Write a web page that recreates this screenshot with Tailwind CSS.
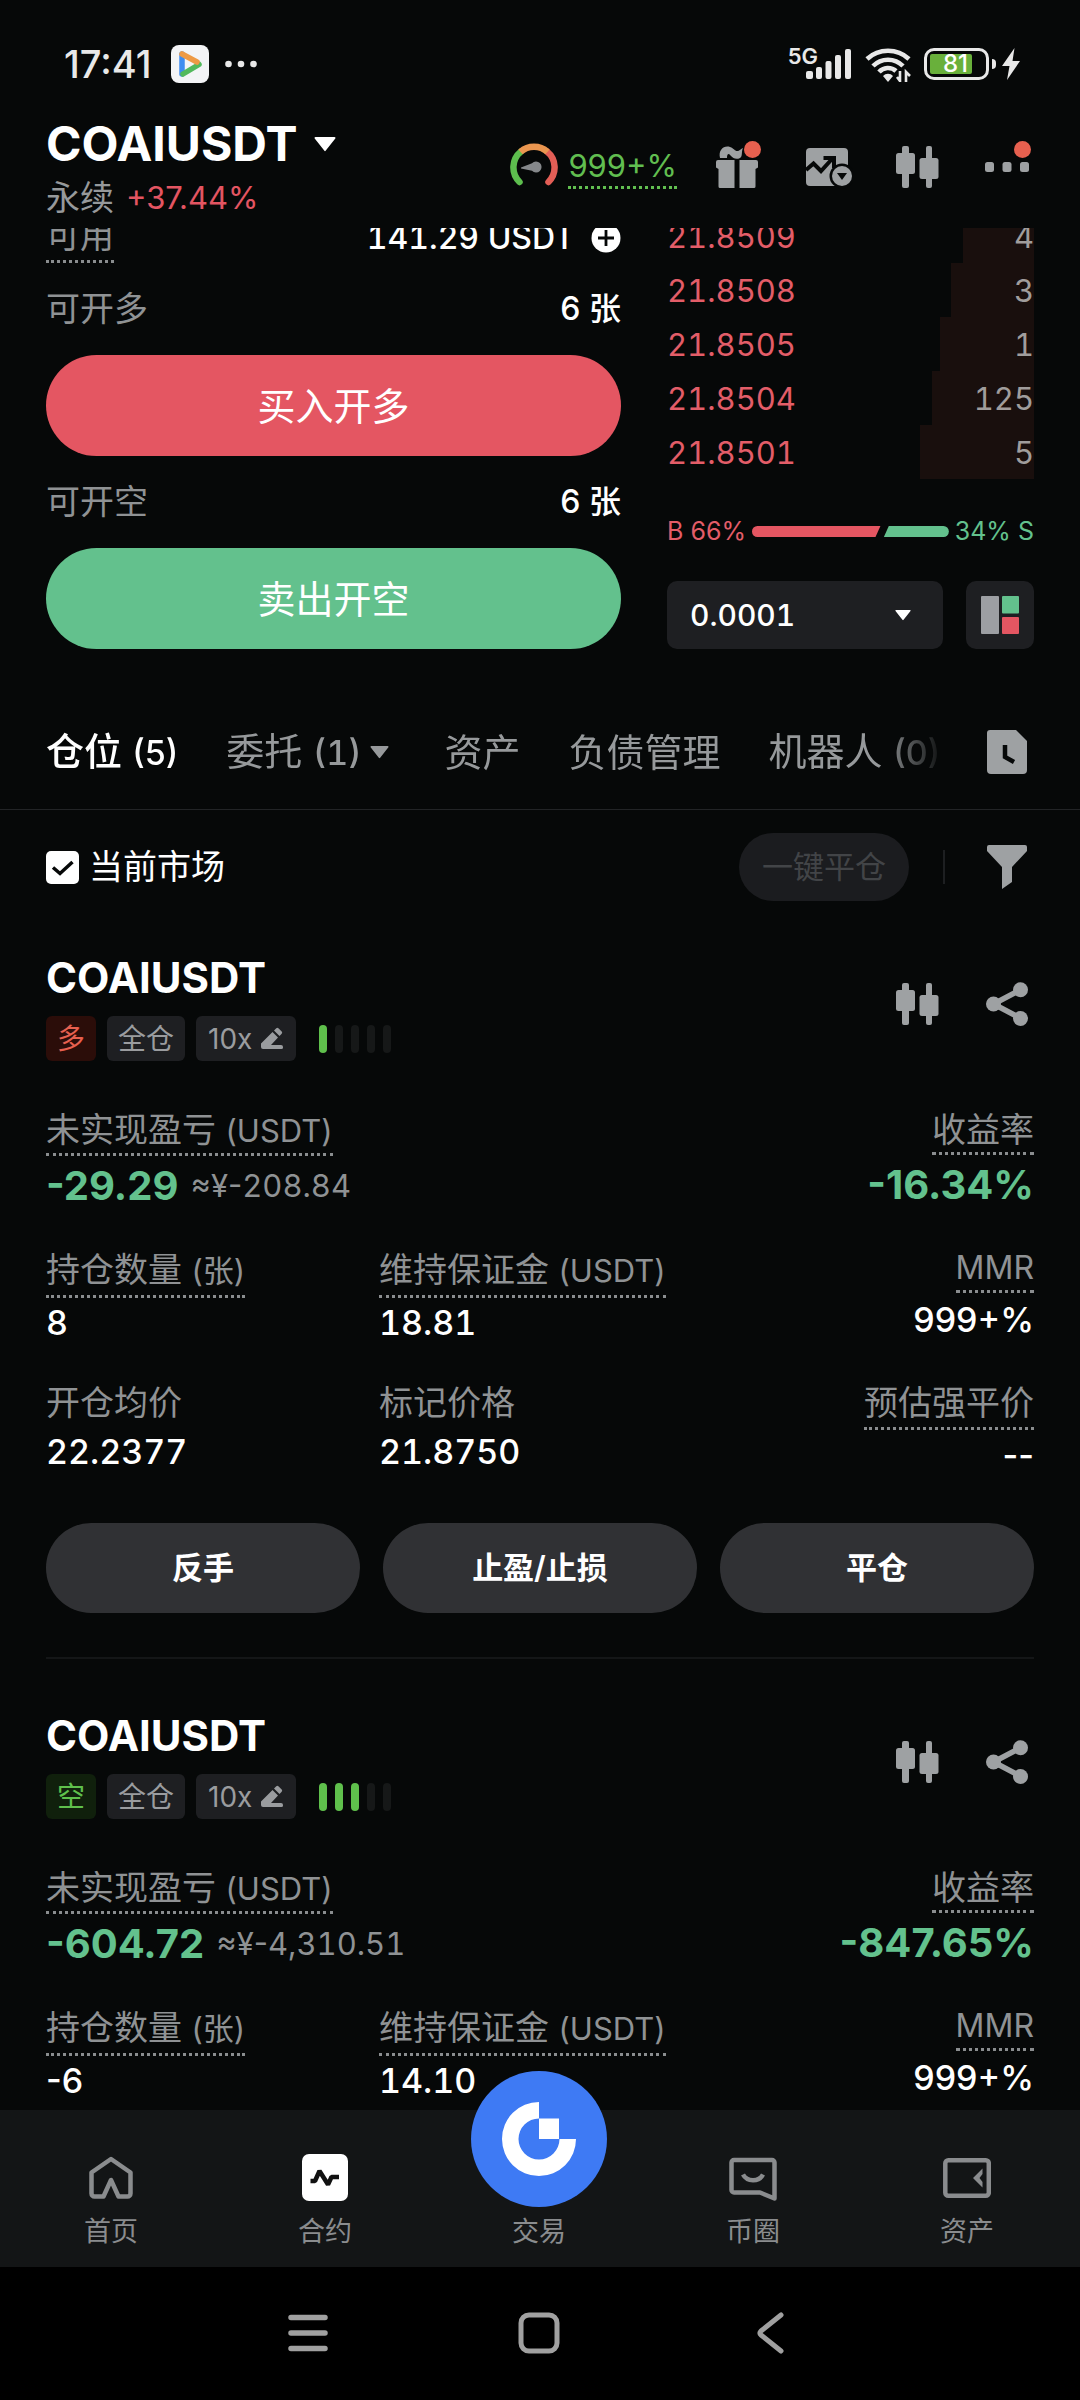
<!DOCTYPE html>
<html lang="zh-CN">
<head>
<meta charset="utf-8">
<meta name="viewport" content="width=device-width, initial-scale=1">
<title>COAIUSDT 永续</title>
<script src="https://cdn.jsdelivr.net/npm/@tailwindcss/browser@4"></script>
</head>
<body class="flex min-h-screen flex-col bg-[#060808] font-['Inter','Noto_Sans_CJK_SC',sans-serif] text-[31px] leading-10 text-white">

<svg class="hidden" aria-hidden="true">
  <symbol id="candles" viewBox="0 0 44 44">
    <g fill="currentColor">
      <rect x="7" y="1" width="7" height="42" rx="2"/><rect x="1" y="8" width="19" height="21" rx="2.5"/>
      <rect x="31" y="1" width="6" height="42" rx="2"/><rect x="24.500" y="13" width="19" height="21" rx="2.5"/>
    </g>
  </symbol>
  <symbol id="share" viewBox="0 0 44 44">
    <path d="M36 7.500 8.500 22 36 36.500" fill="none" stroke="currentColor" stroke-width="5.5"/>
    <g fill="currentColor"><circle cx="8.500" cy="22" r="7.500"/><circle cx="35.500" cy="7.800" r="7.500"/><circle cx="35.500" cy="36.500" r="7.500"/></g>
  </symbol>
  <symbol id="pen" viewBox="0 0 24 24">
    <g fill="currentColor"><path d="M1 16.500 12.500 5 18 10.500 11 18H21a2 2 0 0 1 2 2v.5a1.500 1.500 0 0 1-1.500 1.500H3a2 2 0 0 1-2-2Z"/><path d="M14 3.500 16.300 1.300a1.500 1.500 0 0 1 2.100 0l3.300 3.300a1.500 1.500 0 0 1 0 2.100L19.500 9Z"/></g>
  </symbol>
  <symbol id="caret" viewBox="0 0 22 16"><path d="M1.500 1h19a1 1 0 0 1 .8 1.600L11.800 14.600a1 1 0 0 1-1.600 0L.7 2.600A1 1 0 0 1 1.500 1Z" fill="currentColor"/></symbol>
</svg>

<header class="px-[46px] pt-10 pb-[11px]">
  <div class="flex h-12 items-center pr-3.5 pl-[18px] text-[#e8e8e8]">
    <span class="text-[38px] font-medium">17:41</span>
    <svg class="ml-5 size-[38px]" viewBox="0 0 38 38">
      <rect width="38" height="38" rx="8" fill="#f3f4f6"/>
      <path d="M11 9v20" stroke="#3f8df0" stroke-width="5.500" stroke-linecap="round"/>
      <path d="M12 29 28 19.500" stroke="#52b95c" stroke-width="5.500" stroke-linecap="round"/>
      <path d="M11 9 26 17" stroke="#ee9a45" stroke-width="5.500" stroke-linecap="round"/>
    </svg>
    <svg class="ml-4 h-2 w-8" viewBox="0 0 32 8" fill="currentColor"><circle cx="3.500" cy="4" r="3.300"/><circle cx="16" cy="4" r="3.300"/><circle cx="28.500" cy="4" r="3.300"/></svg>
    <div class="ml-auto flex items-center">
      <span class="self-start text-[22px] leading-5 font-semibold">5G</span>
      <svg class="-ml-3 h-8 w-[46px]" viewBox="0 0 46 32" fill="currentColor"><rect x="0" y="23" width="7" height="8" rx="2"/><rect x="10" y="19" width="6" height="12" rx="2"/><rect x="19.500" y="13" width="6" height="18" rx="2"/><rect x="29" y="7" width="6" height="24" rx="2"/><rect x="39" y="1" width="6" height="30" rx="2"/></svg>
      <svg class="ml-3 h-9 w-12" viewBox="0 0 48 36" fill="none" stroke="currentColor">
        <path d="M3 13a31 31 0 0 1 42 0M9 20a21 21 0 0 1 30 0M15 26a12 12 0 0 1 17-1" stroke-width="4.600"/>
        <path d="M19 30a6.500 6.500 0 0 1 10 0l-5 6Z" fill="currentColor" stroke="none"/>
        <path d="M36 25v10l-3-4M42 36V26l4 4" stroke-width="2.600"/>
      </svg>
      <div class="ml-3 flex h-8 w-[65px] rounded-[10px] border-[3px] border-[#e8e8e8] p-[3px]"><span class="flex h-5 w-[42px] items-center justify-end rounded-xs bg-[#69b03b] pr-1 text-[24px] leading-5 font-medium text-white">81</span></div>
      <span class="ml-[3px] h-2.5 w-1 rounded-r bg-[#e8e8e8]"></span>
      <svg class="ml-1.5 h-8 w-[18px]" viewBox="0 0 18 32" fill="currentColor"><path d="M12.500 0 0 18h7.500L5 32 18 13h-7.500Z"/></svg>
    </div>
  </div>

  <div class="mt-7 flex items-center justify-between">
    <div>
      <button class="flex h-14 items-center gap-4 text-[48px] font-bold">COAIUSDT<svg class="h-4 w-[22px]"><use href="#caret"/></svg></button>
      <div class="mt-1.5 flex items-center gap-3"><span class="text-[34px] text-[#96999b]">永续</span><span class="text-[#e35562]">+37.44%</span></div>
    </div>
    <div class="mr-[5px] flex items-center gap-[46px] text-[#9ea1a3]">
      <a href="#risk" class="-mr-2 flex items-center gap-2.5 text-[#61be50]">
        <svg class="size-12" viewBox="0 0 48 48" fill="none" stroke-width="6.500">
          <path d="M9.500 39A20.500 20.500 0 0 1 11 8.500" stroke="#5dbe4e" stroke-linecap="round"/>
          <path d="M37 8.500A20.500 20.500 0 0 1 38.500 39" stroke="#e35e56" stroke-linecap="round"/>
          <path d="M10.500 8.900A20.500 20.500 0 0 1 37.500 8.900" stroke="#ea9650"/>
          <path d="M11 24.500 22 20.300a5.500 5.500 0 1 1 0 7.400L11 25.500Z" fill="#85888b"/>
        </svg>
        <span class="border-b-[3px] border-dotted border-current">999+%</span>
      </a>
      <button class="relative" aria-label="礼物">
        <svg class="size-11" viewBox="0 0 44 44" fill="currentColor"><path d="M3 15H19.500V43H5a1.500 1.500 0 0 1-1.500-1.500V24L1 22.500V17a2 2 0 0 1 2-2ZM24.500 15H41a2 2 0 0 1 2 2v5.500L40.500 24V41.500A1.500 1.500 0 0 1 39 43H24.500Z"/><path d="M5 13C3 5 9 0 15 2c4 1.500 5 4 7 4 3 0 3-2 6-3-2 4 0 8-3 10-4 2-7 0-9-2-2-3-4-3-4 2Z"/></svg>
        <span class="absolute -top-1 -right-0.5 size-[17px] rounded-full bg-[#e7604f]"></span>
      </button>
      <button aria-label="行情图">
        <svg class="h-11 w-12" viewBox="0 0 48 44"><rect x="1" y="3" width="42" height="38" rx="4" fill="currentColor"/><path d="M1 25 8.500 18.500 16 26 27 14M18.500 13H29V23" fill="none" stroke="#060808" stroke-width="4"/><circle cx="37" cy="31" r="12.500" fill="#060808"/><circle cx="37" cy="31" r="10" fill="currentColor"/><path d="M32 28h10l-5 7Z" fill="#060808"/></svg>
      </button>
      <button class="-ml-1" aria-label="K线"><svg class="size-11"><use href="#candles"/></svg></button>
      <button class="relative" aria-label="更多">
        <svg class="size-11" viewBox="0 0 44 44" fill="currentColor"><rect x="0" y="17" width="9" height="10" rx="2.500"/><rect x="17.500" y="17" width="9" height="10" rx="2.500"/><rect x="35" y="17" width="9" height="10" rx="2.500"/></svg>
        <span class="absolute -top-1 -right-0.5 size-[17px] rounded-full bg-[#e7604f]"></span>
      </button>
    </div>
  </div>
</header>

<main>
  <section class="-mt-px flex gap-[46px] overflow-hidden px-[46px]">
    <div class="-mt-4 flex flex-1 flex-col gap-[23px]">
      <div class="flex items-start justify-between">
        <span class="border-b-[3px] border-dotted border-[#8a8d8f] text-[34px] leading-12 text-[#8f9294]">可用</span>
        <span class="flex h-[51px] items-center gap-4 font-medium"><span class="text-[32px]"><span class="tabular-nums">141.29</span> USDT</span>
          <svg class="size-[30px]" viewBox="0 0 30 30"><circle cx="15" cy="15" r="14.500" fill="#fff"/><path d="M15 7v16M7 15h16" stroke="#060808" stroke-width="2.800"/></svg></span>
      </div>
      <div class="flex h-[46px] items-center justify-between"><span class="text-[34px] text-[#8f9294]">可开多</span><span class="text-[32px] font-medium">6 张</span></div>
      <button class="h-[101px] rounded-full bg-[#e45662] text-[38px]">买入开多</button>
      <div class="flex h-[46px] items-center justify-between"><span class="text-[34px] text-[#8f9294]">可开空</span><span class="text-[32px] font-medium">6 张</span></div>
      <button class="h-[101px] rounded-full bg-[#63c18d] text-[38px]">卖出开空</button>
    </div>

    <div class="-mt-[19px] w-[367px]">
      <ul class="text-[#e35d68] tabular-nums">
        <li class="relative flex h-[54px] items-center justify-between pt-0.5"><span class="absolute inset-y-0 right-0 bg-[#190f0d]" style="width:19.300%"></span><span>21.8509</span><span class="relative text-[#a09d9c]">4</span></li>
        <li class="relative flex h-[54px] items-center justify-between pt-0.5"><span class="absolute inset-y-0 right-0 bg-[#190f0d]" style="width:22.600%"></span><span>21.8508</span><span class="relative text-[#a09d9c]">3</span></li>
        <li class="relative flex h-[54px] items-center justify-between pt-0.5"><span class="absolute inset-y-0 right-0 bg-[#190f0d]" style="width:25.600%"></span><span>21.8505</span><span class="relative text-[#a09d9c]">1</span></li>
        <li class="relative flex h-[54px] items-center justify-between pt-0.5"><span class="absolute inset-y-0 right-0 bg-[#190f0d]" style="width:27.800%"></span><span>21.8504</span><span class="relative text-[#a09d9c]">125</span></li>
        <li class="relative flex h-[54px] items-center justify-between pt-0.5"><span class="absolute inset-y-0 right-0 bg-[#190f0d]" style="width:31.100%"></span><span>21.8501</span><span class="relative text-[#a09d9c]">5</span></li>
      </ul>
      <div class="mt-[38px] flex h-7 items-center gap-1.5 text-[25px]">
        <span class="whitespace-nowrap text-[#e35d68]">B 66%</span>
        <svg class="h-[11px] min-w-0 flex-1" viewBox="0 0 200 11" preserveAspectRatio="none"><path d="M5.500 0H130.500L125.500 11H5.500a5.500 5.500 0 0 1 0-11Z" fill="#e45662"/><path d="M139 0H194.500a5.500 5.500 0 0 1 0 11H134Z" fill="#63c18d"/></svg>
        <span class="whitespace-nowrap text-[#63c18d]">34% S</span>
      </div>
      <div class="mt-9 flex gap-[23px]">
        <label class="relative flex-1">
          <select aria-label="价格精度" class="h-[68px] w-full appearance-none rounded-[10px] bg-[#1e1f22] px-[23px] text-[30px] font-medium tabular-nums"><option>0.0001</option></select>
          <svg class="pointer-events-none absolute top-7 right-8 h-3 w-4" viewBox="0 0 22 16"><use href="#caret"/></svg>
        </label>
        <button class="flex size-[68px] items-center justify-center rounded-[10px] bg-[#1e1f22]" aria-label="盘口布局">
          <svg class="size-[38px]" viewBox="0 0 38 38"><rect width="18" height="38" rx="1" fill="#9d9fa3"/><rect x="21" width="17" height="17.500" rx="1" fill="#63c18d"/><rect x="21" y="21" width="17" height="17" rx="1" fill="#e45662"/></svg>
        </button>
      </div>
    </div>
  </section>

  <div class="mt-[46px] flex h-[115px] items-center border-b border-[#222426] px-[46px]">
    <nav class="flex min-w-0 flex-1 items-center gap-12 overflow-hidden text-[38px] leading-12 whitespace-nowrap text-[#96999b] [mask-image:linear-gradient(to_right,black_calc(100%-64px),transparent)]">
      <a href="#positions" class="font-medium text-white">仓位 <span class="text-[34px]">(5)</span></a>
      <a href="#orders" class="mr-2 flex items-center gap-2"><span>委托 <span class="text-[34px] font-medium tabular-nums">(1)</span></span><svg class="h-3.5 w-[19px]" viewBox="0 0 22 16"><use href="#caret"/></svg></a>
      <a href="#assets">资产</a>
      <a href="#debts">负债管理</a>
      <a href="#bots">机器人 <span class="text-[34px] font-medium">(0)</span></a>
    </nav>
    <button class="mr-[5px] ml-10 text-[#9ea1a3]" aria-label="历史记录">
      <svg class="size-11" viewBox="0 0 44 44"><path d="M5 0H31L42 11V40a4 4 0 0 1-4 4H6a4 4 0 0 1-4-4V3a3 3 0 0 1 3-3Z" fill="currentColor"/><path d="M20 15V27L29 32" fill="none" stroke="#060808" stroke-width="4.500"/></svg>
    </button>
  </div>

  <div class="flex h-[91px] items-center px-[46px] pt-[23px]">
    <label class="flex items-center gap-2.5 text-[34px]">
      <span class="relative flex size-[33px]">
        <input type="checkbox" checked class="size-full appearance-none rounded-[5px] bg-white">
        <svg class="pointer-events-none absolute inset-0" viewBox="0 0 33 33" fill="none" stroke="#060808" stroke-width="3.500"><path d="M7 16.500 14 22.500 26.500 11"/></svg>
      </span>当前市场</label>
    <button class="ml-auto h-[68px] rounded-full bg-[#1b1c1f] px-[23px] text-[#424447]">一键平仓</button>
    <span class="ml-[34px] h-[34px] w-0.5 bg-[#1d1f21]"></span>
    <button class="mr-[5px] ml-10 text-[#9ea1a3]" aria-label="筛选"><svg class="size-11" viewBox="0 0 44 44"><path d="M4 0H40a2 2 0 0 1 2 2V6L27 22V37L17 44V22L2 6V2a2 2 0 0 1 2-2Z" fill="currentColor"/></svg></button>
  </div>

  <article class="mx-[46px] border-b-2 border-[#141617] pt-[53px] pb-11">
    <div class="flex items-center justify-between">
      <div>
        <h2 class="text-[42px] leading-12 font-bold">COAIUSDT</h2>
        <div class="mt-[14px] flex h-[45px] items-center gap-[11px] text-[28px] text-[#9a9c9f]">
          <span class="flex h-full items-center rounded-md bg-[#2b0d09] px-[11px] text-[#e7604f]">多</span>
          <span class="flex h-full items-center rounded-md bg-[#1e1f22] px-[11px]">全仓</span>
          <button class="flex h-full items-center gap-2 rounded-md bg-[#1e1f22] px-3">10x<svg class="size-6"><use href="#pen"/></svg></button>
          <div class="ml-3 flex gap-2">
            <i class="h-7 w-2 rounded-full bg-[#5fc04c]"></i><i class="h-7 w-2 rounded-full bg-[#161818]"></i><i class="h-7 w-2 rounded-full bg-[#161818]"></i><i class="h-7 w-2 rounded-full bg-[#161818]"></i><i class="h-7 w-2 rounded-full bg-[#161818]"></i>
          </div>
        </div>
      </div>
      <div class="mr-[5px] flex gap-[46px] pb-2 text-[#9ea1a3]">
        <button aria-label="K线"><svg class="size-11"><use href="#candles"/></svg></button>
        <button aria-label="分享"><svg class="size-11"><use href="#share"/></svg></button>
      </div>
    </div>
    <dl class="mt-[47px] flex justify-between text-[34px] text-[#8f9294]">
      <div>
        <dt class="w-fit border-b-[3px] border-dotted border-[#8a8d8f] leading-11">未实现盈亏 <span class="text-[31px]">(USDT)</span></dt>
        <dd class="mt-2 flex items-center gap-3 text-[31px] leading-11"><span class="text-[40px] font-bold text-[#63c18d]">-29.29</span><span>≈¥-<span class="tabular-nums">208.84</span></span></dd>
      </div>
      <div class="text-right">
        <dt class="ml-auto w-fit border-b-[3px] border-dotted border-[#8a8d8f] leading-11">收益率</dt>
        <dd class="mt-2 text-[40px] leading-11 font-bold text-[#63c18d]">-16.34%</dd>
      </div>
    </dl>
    <dl class="mt-[38px] grid grid-cols-3 gap-x-[11px] gap-y-9 text-[34px] text-[#8f9294]">
      <div>
        <dt class="w-fit border-b-[3px] border-dotted border-[#8a8d8f] leading-12">持仓数量 <span class="text-[31px]">(张)</span></dt>
        <dd class="mt-[5px] font-medium text-white tabular-nums">8</dd>
      </div>
      <div>
        <dt class="w-fit border-b-[3px] border-dotted border-[#8a8d8f] leading-12 whitespace-nowrap">维持保证金 <span class="text-[31px]">(USDT)</span></dt>
        <dd class="mt-[5px] font-medium text-white tabular-nums">18.81</dd>
      </div>
      <div class="text-right">
        <dt class="ml-auto w-fit border-b-[3px] border-dotted border-[#8a8d8f] text-[32px] leading-11">MMR</dt>
        <dd class="mt-[7px] font-medium text-white">999+%</dd>
      </div>
      <div>
        <dt class="leading-12">开仓均价</dt>
        <dd class="mt-[5px] font-medium text-white tabular-nums">22.2377</dd>
      </div>
      <div>
        <dt class="leading-12">标记价格</dt>
        <dd class="mt-[5px] font-medium text-white tabular-nums">21.8750</dd>
      </div>
      <div class="text-right">
        <dt class="ml-auto w-fit border-b-[3px] border-dotted border-[#8a8d8f] leading-12">预估强平价</dt>
        <dd class="mt-[5px] font-medium text-white">--</dd>
      </div>
    </dl>
    <div class="mt-12 grid grid-cols-3 gap-[23px] font-semibold">
      <button class="h-[90px] rounded-full bg-[#303134]">反手</button>
      <button class="h-[90px] rounded-full bg-[#303134]">止盈/止损</button>
      <button class="h-[90px] rounded-full bg-[#303134]">平仓</button>
    </div>
  </article>

  <article class="mx-[46px] pt-[53px]">
    <div class="flex items-center justify-between">
      <div>
        <h2 class="text-[42px] leading-12 font-bold">COAIUSDT</h2>
        <div class="mt-[14px] flex h-[45px] items-center gap-[11px] text-[28px] text-[#9a9c9f]">
          <span class="flex h-full items-center rounded-md bg-[#10200c] px-[11px] text-[#5fc04c]">空</span>
          <span class="flex h-full items-center rounded-md bg-[#1e1f22] px-[11px]">全仓</span>
          <button class="flex h-full items-center gap-2 rounded-md bg-[#1e1f22] px-3">10x<svg class="size-6"><use href="#pen"/></svg></button>
          <div class="ml-3 flex gap-2">
            <i class="h-7 w-2 rounded-full bg-[#5fc04c]"></i><i class="h-7 w-2 rounded-full bg-[#5fc04c]"></i><i class="h-7 w-2 rounded-full bg-[#5fc04c]"></i><i class="h-7 w-2 rounded-full bg-[#161818]"></i><i class="h-7 w-2 rounded-full bg-[#161818]"></i>
          </div>
        </div>
      </div>
      <div class="mr-[5px] flex gap-[46px] pb-2 text-[#9ea1a3]">
        <button aria-label="K线"><svg class="size-11"><use href="#candles"/></svg></button>
        <button aria-label="分享"><svg class="size-11"><use href="#share"/></svg></button>
      </div>
    </div>
    <dl class="mt-[47px] flex justify-between text-[34px] text-[#8f9294]">
      <div>
        <dt class="w-fit border-b-[3px] border-dotted border-[#8a8d8f] leading-11">未实现盈亏 <span class="text-[31px]">(USDT)</span></dt>
        <dd class="mt-2 flex items-center gap-3 text-[31px] leading-11"><span class="text-[40px] font-bold text-[#63c18d]">-604.72</span><span>≈¥-<span class="tabular-nums">4,310.51</span></span></dd>
      </div>
      <div class="text-right">
        <dt class="ml-auto w-fit border-b-[3px] border-dotted border-[#8a8d8f] leading-11">收益率</dt>
        <dd class="mt-2 text-[40px] leading-11 font-bold text-[#63c18d]">-847.65%</dd>
      </div>
    </dl>
    <dl class="mt-[38px] grid grid-cols-3 gap-x-[11px] text-[34px] text-[#8f9294]">
      <div>
        <dt class="w-fit border-b-[3px] border-dotted border-[#8a8d8f] leading-12">持仓数量 <span class="text-[31px]">(张)</span></dt>
        <dd class="mt-[5px] font-medium text-white">-6</dd>
      </div>
      <div>
        <dt class="w-fit border-b-[3px] border-dotted border-[#8a8d8f] leading-12 whitespace-nowrap">维持保证金 <span class="text-[31px]">(USDT)</span></dt>
        <dd class="mt-[5px] font-medium text-white tabular-nums">14.10</dd>
      </div>
      <div class="text-right">
        <dt class="ml-auto w-fit border-b-[3px] border-dotted border-[#8a8d8f] text-[32px] leading-11">MMR</dt>
        <dd class="mt-[7px] font-medium text-white">999+%</dd>
      </div>
    </dl>
  </article>
</main>

<footer class="sticky bottom-0 mt-auto">
  <nav class="grid grid-cols-5 bg-[#131516] pt-11 pr-1.5 pb-[19px] pl-1 text-[27px] leading-8 text-[#8a8c8e]">
    <a href="#home" class="flex flex-col items-center gap-3.5">
      <svg class="size-12" viewBox="0 0 48 48" fill="none" stroke="currentColor" stroke-width="4.500" stroke-linejoin="round"><path d="M24 5 43.500 18.500V39.500a3 3 0 0 1-3 3H31.500L24 26 16.500 42.500H7.500a3 3 0 0 1-3-3V18.500Z"/></svg>首页</a>
    <a href="#futures" class="flex flex-col items-center gap-3.5">
      <svg class="size-12" viewBox="0 0 48 48"><rect x="1" width="46" height="47" rx="7" fill="#fff"/><path d="M9.500 27H14L18.500 17 27 30.500 30.500 23H38" fill="none" stroke="#111" stroke-width="4.500" stroke-linejoin="bevel"/></svg>合约</a>
    <a href="#trade" class="relative flex flex-col items-center gap-3.5">
      <span class="h-12"></span>
      <svg class="absolute -top-[83px] left-1/2 size-[136px] -translate-x-1/2" viewBox="0 0 136 136"><circle cx="68" cy="68" r="68" fill="#3e7af4"/><path d="M68 31A37 37 0 1 0 105 68H88.500A20.500 20.500 0 1 1 68 47.500Z" fill="#fff"/><rect x="68" y="47.500" width="20" height="20.500" fill="#fff"/></svg>交易</a>
    <a href="#community" class="flex flex-col items-center gap-3.5">
      <svg class="size-12" viewBox="0 0 48 48" fill="none" stroke="currentColor" stroke-width="4.500" stroke-linejoin="round"><path d="M5 6H43a2.500 2.500 0 0 1 2.500 2.500V44.500L31 38.500H5A2.500 2.500 0 0 1 2.500 36V8.500A2.500 2.500 0 0 1 5 6Z"/><path d="M14 20.500C18 28 30 28 34 20.500"/></svg>币圈</a>
    <a href="#wallet" class="flex flex-col items-center gap-3.5">
      <svg class="size-12" viewBox="0 0 48 48" fill="none" stroke="currentColor" stroke-width="4.500"><rect x="2.300" y="6.300" width="43.500" height="35.500" rx="3"/><path d="M39.500 14.500V20L36.500 24 39.500 28V33.500L30 24Z" fill="currentColor" stroke="none"/></svg>资产</a>
  </nav>
  <div class="flex h-[133px] items-center justify-center gap-[187px] bg-black pr-0.5 pb-0.5 text-[#a0a0a0]">
    <button aria-label="最近任务"><svg class="size-11" viewBox="0 0 44 44" stroke="currentColor" stroke-width="5.500" stroke-linecap="round"><path d="M5 6.500H39M5 22H39M5 37.500H39"/></svg></button>
    <button aria-label="主屏幕"><svg class="size-11" viewBox="0 0 44 44" fill="none" stroke="currentColor" stroke-width="5"><rect x="4" y="4" width="36" height="36" rx="8"/></svg></button>
    <button aria-label="返回"><svg class="size-11" viewBox="0 0 44 44" fill="none" stroke="currentColor" stroke-width="5" stroke-linecap="round" stroke-linejoin="round"><path d="M33 4 13 20Q11 22 13 24L33 40"/></svg></button>
  </div>
</footer>
</body>
</html>
